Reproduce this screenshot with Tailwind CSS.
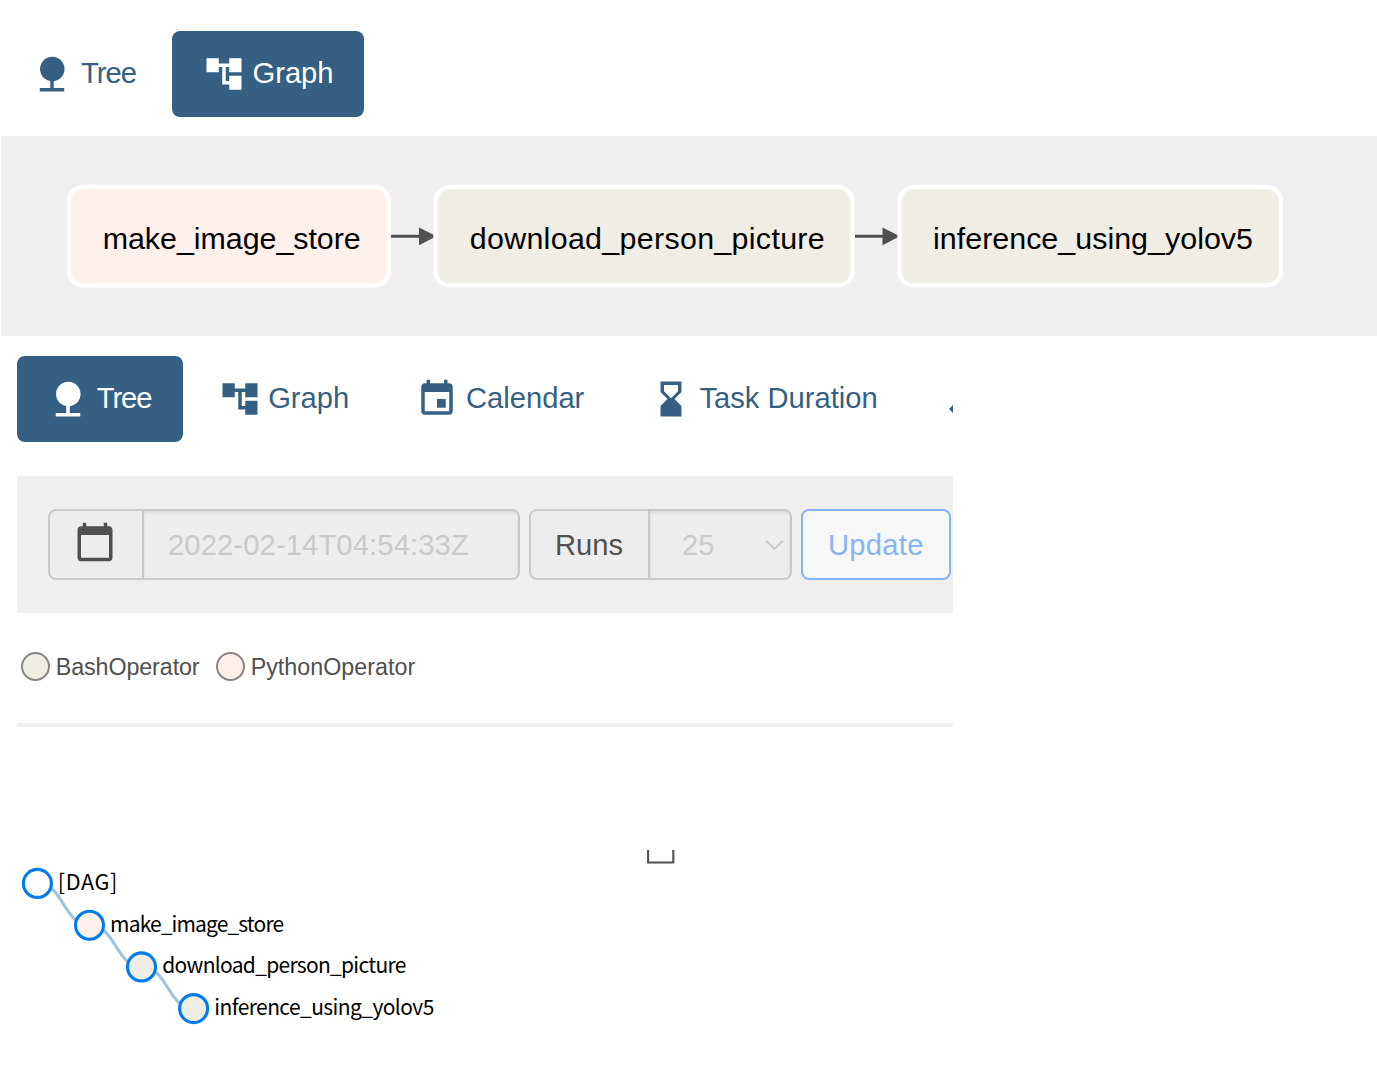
<!DOCTYPE html>
<html lang="en">
<head>
<meta charset="utf-8">
<title>DAG views</title>
<script src="https://cdn.jsdelivr.net/npm/@tailwindcss/browser@4"></script>
</head>
<body class="h-[1089px] overflow-hidden bg-white font-['Liberation_Sans',sans-serif] text-[29.17px] leading-none text-[#51504f]">
<svg class="hidden">
  <symbol id="tree" viewBox="0 0 24 24"><path d="M13 16.12c3.47-.41 6.17-3.36 6.17-6.95 0-3.87-3.13-7-7-7s-7 3.13-7 7c0 3.47 2.52 6.34 5.83 6.89V20H5v2h14v-2h-6v-3.88z"/></symbol>
  <symbol id="graph" viewBox="0 0 24 24"><path d="M22 11V3h-7v3H9V3H2v8h7V8h2v10h4v3h7v-8h-7v3h-2V8h2v3z"/></symbol>
  <symbol id="event" viewBox="0 0 24 24"><path d="M17 12h-5v5h5v-5zM16 1v2H8V1H6v2H5c-1.11 0-1.99.9-1.99 2L3 19c0 1.1.89 2 2 2h14c1.1 0 2-.9 2-2V5c0-1.1-.9-2-2-2h-1V1h-2zm3 18H5V8h14v11z"/></symbol>
  <symbol id="hourglass" viewBox="0 0 24 24"><path d="M18 22l-.01-6L14 12l3.99-4.01L18 2H6v6l4 4-4 3.99V22h12zM8 7.5V4h8v3.5l-4 4-4-4z"/></symbol>
  <symbol id="today" viewBox="0 0 24 24"><path d="M20 3h-1V1h-2v2H7V1H5v2H4c-1.1 0-2 .9-2 2v16c0 1.1.9 2 2 2h16c1.1 0 2-.9 2-2V5c0-1.1-.9-2-2-2zm0 18H4V8h16v13z"/></symbol>
</svg>

<nav class="flex h-[136px] gap-[5px] pt-[31px] text-[#356084]">
  <a class="flex h-[86px] w-[167px] items-center gap-[8px] pl-[31px]"><svg class="size-[42px] shrink-0 fill-current"><use href="#tree"/></svg><span class="tracking-[-1px]">Tree</span></a>
  <a class="flex h-[86px] w-[192px] items-center gap-[8px] rounded-lg bg-[#356084] pl-[30.5px] text-white"><svg class="size-[42px] shrink-0 fill-current"><use href="#graph"/></svg><span>Graph</span></a>
</nav>

<section class="ml-px h-[200px] bg-[#efefef]">
  <svg class="block" width="1376" height="200" viewBox="1 136 1376 200">
    <g fill="#51504f" stroke="none">
      <path d="M391 234.8h28v-7.3l17.5 8.8-17.5 9v-7.5h-28z"/>
      <path d="M855 234.8h27.5v-7.3l17.5 8.8-17.5 9v-7.5H855z"/>
    </g>
    <g stroke="#fff" stroke-width="4.4">
      <rect x="69" y="187" width="319.8" height="98.4" rx="14" fill="#fff0eb"/>
      <rect x="435.5" y="187" width="417" height="98.4" rx="14" fill="#f0ede4"/>
      <rect x="899.5" y="187" width="381.3" height="98.4" rx="14" fill="#f0ede4"/>
    </g>
    <g fill="#000" font-size="30.4">
      <text x="102.7" y="248.6" textLength="258">make_image_store</text>
      <text x="469.7" y="248.6" textLength="355">download_person_picture</text>
      <text x="933" y="248.6" textLength="320">inference_using_yolov5</text>
    </g>
  </svg>
</section>

<main class="ml-[16.7px] w-[936px] overflow-hidden">
  <nav class="flex h-[140px] gap-[4px] pt-5 text-[#356084]">
    <a class="flex h-[86px] w-[166.5px] shrink-0 items-center gap-[7.5px] rounded-lg bg-[#356084] pl-[30.5px] text-white"><svg class="size-[42px] shrink-0 fill-current"><use href="#tree"/></svg><span class="tracking-[-1px]">Tree</span></a>
    <a class="flex h-[86px] w-[194px] shrink-0 items-center gap-[7.5px] pl-[31.5px]"><svg class="size-[42px] shrink-0 fill-current"><use href="#graph"/></svg><span>Graph</span></a>
    <a class="flex h-[86px] w-[229.5px] shrink-0 items-center gap-[7.8px] pl-[31px]"><svg class="size-[42px] shrink-0 fill-current"><use href="#event"/></svg><span>Calendar</span></a>
    <a class="flex h-[86px] w-[326.5px] shrink-0 items-center gap-[7.8px] pl-[31px]"><svg class="size-[42px] shrink-0 fill-current"><use href="#hourglass"/></svg><span class="whitespace-nowrap">Task Duration</span></a>
    <a class="flex h-[86px] shrink-0 items-center pt-5"><svg class="h-2 w-1 fill-current" viewBox="0 0 4 8"><path d="M0 4L4 0v8z"/></svg></a>
  </nav>

  <form class="flex h-[137px] items-center bg-[#efefef] pl-[31.3px]">
    <div class="flex h-[70.5px] w-[472.5px] overflow-hidden rounded-lg border-2 border-[#cacaca] bg-[#ededed]">
      <span class="flex w-[94px] items-center justify-center border-r-2 border-[#cacaca] pr-px pb-[5px]"><svg class="size-[42px] fill-current"><use href="#today"/></svg></span>
      <span class="flex flex-1 items-center pt-0.5 pl-6 tracking-[0.13px] text-[#cacaca] shadow-[inset_0_2px_3px_rgba(0,0,0,0.08)]">2022-02-14T04:54:33Z</span>
    </div>
    <div class="ml-[8.5px] flex h-[70.5px] w-[263px] overflow-hidden rounded-lg border-2 border-[#cacaca] bg-[#ededed]">
      <span class="flex w-[119px] items-center border-r-2 border-[#cacaca] pt-0.5 pl-6">Runs</span>
      <span class="flex flex-1 items-center justify-between pr-[6px] pl-8 text-[#cacaca] shadow-[inset_0_2px_3px_rgba(0,0,0,0.08)]"><span class="pt-0.5">25</span><svg class="h-[10px] w-[19px] fill-none stroke-current stroke-2" viewBox="0 0 19 10"><path d="M1 .8l8.5 8L18 .8"/></svg></span>
    </div>
    <button type="button" class="ml-[9px] flex h-[70.5px] w-[149.7px] items-center justify-center rounded-lg border-2 border-[#84b5f5] bg-[#f7f7f7] pt-0.5 tracking-[0.3px] text-[#84b5f5]">Update</button>
  </form>

  <div class="flex h-[110px] items-start pt-[39px] pl-[4px] text-[23.3px]">
    <span class="size-[29px] rounded-full border-2 border-[#888785] bg-[#f0ede4]"></span>
    <span class="ml-1.5 w-[160px] tracking-[-0.1px] leading-[31px]">BashOperator</span>
    <span class="size-[29px] rounded-full border-2 border-[#888785] bg-[#fff0eb]"></span>
    <span class="ml-1.5 leading-[31px]">PythonOperator</span>
  </div>
  <div class="h-1 bg-[#efefef]"></div>

  <svg class="block" width="936" height="362" viewBox="16.7 727 936 362">
    <path d="M647.8 850v12.5h25.2V850" fill="none" stroke="#51504f" stroke-width="2.1"/>
    <g fill="none" stroke="#9ec3e1" stroke-width="3.1">
      <path d="M37.3 883.4c26 0 26 41.8 52.1 41.8"/>
      <path d="M89.4 925.2c26 0 26 41.7 52.1 41.7"/>
      <path d="M141.5 966.9c26 0 26 41.7 52.1 41.7"/>
    </g>
    <g stroke="#017cee" stroke-width="3.1">
      <circle cx="37.1" cy="883.4" r="14" fill="#fff"/>
      <circle cx="89.2" cy="925.2" r="14" fill="#fff0eb"/>
      <circle cx="141.2" cy="966.9" r="14" fill="#f0ede4"/>
      <circle cx="193.3" cy="1008.6" r="14" fill="#f0ede4"/>
    </g>
    <g class="font-['Noto_Sans_CJK_KR',sans-serif]" fill="#000" font-size="21">
      <text x="57.5" y="889.7" font-size="21.6" textLength="59.5">[DAG]</text>
      <text x="109.8" y="931.6" textLength="174">make_image_store</text>
      <text x="162" y="973.3" textLength="244">download_person_picture</text>
      <text x="214" y="1015" textLength="220">inference_using_yolov5</text>
    </g>
  </svg>
</main>
</body>
</html>
